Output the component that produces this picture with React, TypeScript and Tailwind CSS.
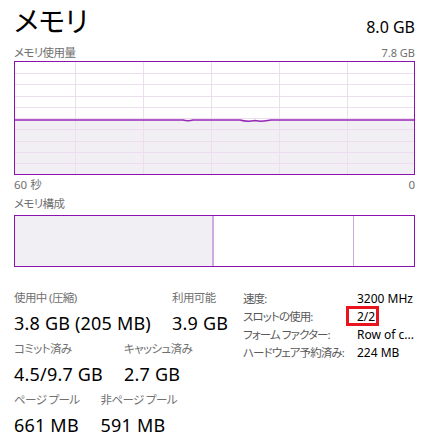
import React from 'react';

const font = { fontFamily: "'Noto Sans', 'Noto Sans CJK JP', sans-serif" };

const hLines = [11, 22, 34, 45, 56, 67, 79, 90, 101];
const vLines = [60, 128, 196, 264, 332];

const UsageGraph: React.FC = () => (
  <div className="border border-[#8b12ae] h-[114px] w-full">
    <svg width="399" height="112" viewBox="0 0 399 112" className="block">
      <rect x="0" y="58" width="399" height="54" fill="#f2eff4" />
      {hLines.map((y) => (
        <line key={y} x1="0" x2="399" y1={y + 0.5} y2={y + 0.5} stroke="#ecdeef" strokeWidth="1" />
      ))}
      {vLines.map((x) => (
        <line key={x} x1={x + 0.5} x2={x + 0.5} y1="0" y2="112" stroke="#ecdeef" strokeWidth="1" />
      ))}
      <path
        d="M0 58 H168 Q173 59.5 178 58 H225 Q232 60 240 58.5 Q247 60 256 58 H399"
        fill="none"
        stroke="#9628b8"
        strokeWidth="1.5"
      />
    </svg>
  </div>
);

const CompositionBar: React.FC = () => (
  <div className="border border-[#8b12ae] h-[52px] w-full flex">
    <div className="w-[197px] bg-[#f2eff4]" />
    <div className="w-[2px] bg-[#cfaadc]" />
    <div className="w-[139px] bg-white" />
    <div className="w-[1px] bg-[#cbaad8]" />
    <div className="flex-1 bg-white" />
  </div>
);

const Stat: React.FC<{ label: string; value: string }> = ({ label, value }) => (
  <div className="flex flex-col">
    <span className="text-[11.5px] leading-[16px] tracking-[-0.6px] text-[#707070] whitespace-pre">{label}</span>
    <span className="mt-[4px] text-[18px] leading-[26px] tracking-[0.2px] text-black whitespace-nowrap">{value}</span>
  </div>
);

const details: { label: string; value: string; boxed?: boolean }[] = [
  { label: '速度:', value: '3200 MHz' },
  { label: 'スロットの使用:', value: '2/2', boxed: true },
  { label: 'フォーム ファクター:', value: 'Row of c...' },
  { label: 'ハードウェア予約済み:', value: '224 MB' },
];

const App: React.FC = () => {
  return (
    <div
      className="w-[428px] h-[447px] bg-white pl-[14px] pr-[13px] pt-[3px] overflow-hidden [font-feature-settings:'palt']"
      style={font}
    >
      {/* header */}
      <div className="flex justify-between items-end">
        <h1 className="text-[28px] leading-[36px] text-black">メモリ</h1>
        <span className="text-[16px] leading-[22px] pb-[1px] text-black">8.0 GB</span>
      </div>

      {/* usage graph */}
      <div className="mt-[6px] flex justify-between text-[11.5px] leading-[16px] text-[#707070]">
        <span className="tracking-[-0.6px]">メモリ使用量</span>
        <span className="text-[11px]">7.8 GB</span>
      </div>
      <UsageGraph />
      <div className="flex justify-between text-[11.5px] leading-[16px] text-[#707070] mt-[2px]">
        <span>60 秒</span>
        <span>0</span>
      </div>

      {/* composition */}
      <div className="mt-[3px] text-[11.5px] leading-[16px] tracking-[-0.6px] text-[#707070]">メモリ構成</div>
      <div className="mt-[3px]">
        <CompositionBar />
      </div>

      {/* stats */}
      <div className="mt-[23px] flex">
        <div className="w-[229px] flex flex-col gap-[5px]">
          <div className="flex gap-[21px]">
            <Stat label="使用中 (圧縮)" value="3.8 GB (205 MB)" />
            <Stat label="利用可能" value="3.9 GB" />
          </div>
          <div className="flex gap-[21px]">
            <Stat label="コミット済み" value="4.5/9.7 GB" />
            <Stat label="キャッシュ済み" value="2.7 GB" />
          </div>
          <div className="flex gap-[21px]">
            <Stat label="ページ プール" value="661 MB" />
            <Stat label="非ページ プール" value="591 MB" />
          </div>
        </div>
        <div className="flex flex-col leading-[18px]">
          {details.map((d) => (
            <div key={d.label} className="flex">
              <span className="w-[114px] text-[11.5px] tracking-[-0.9px] text-[#5a5a5a] whitespace-pre">{d.label}</span>
              <span className="relative text-[12px] text-black whitespace-nowrap">
                {d.value}
                {d.boxed && (
                  <span className="absolute -left-[11px] -top-[2px] w-[33px] h-[20px] border-[3px] border-[#e8141e]" />
                )}
              </span>
            </div>
          ))}
        </div>
      </div>
    </div>
  );
};

export default App;
